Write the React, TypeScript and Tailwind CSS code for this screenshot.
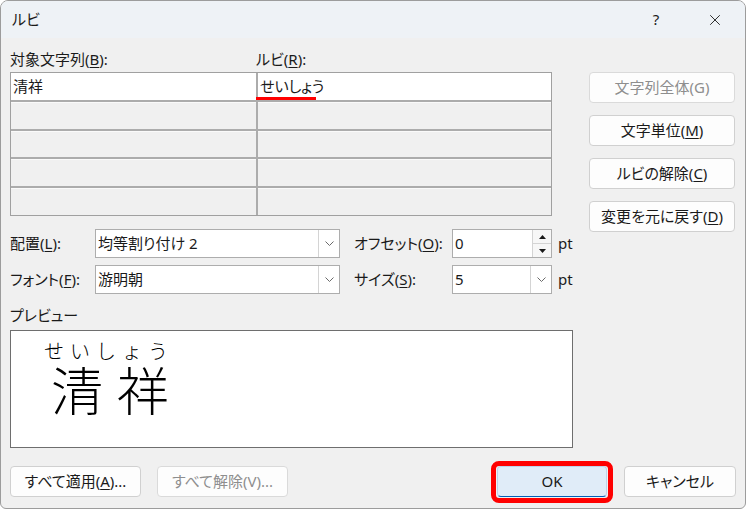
import { X } from "lucide-react";

const U = ({ c }: { c: string }) => <span className="underline underline-offset-2">{c}</span>;

const Chevron = () => (
  <svg width="9" height="5" viewBox="0 0 9 5" fill="none">
    <path d="M0.5 0.5 L4.5 4.5 L8.5 0.5" stroke="#6a6a6a" strokeWidth="1" />
  </svg>
);

const Btn = ({ children, disabled = false, w }: { children: React.ReactNode; disabled?: boolean; w: string }) => (
  <div
    className={`${w} h-[31px] flex items-center justify-center rounded-[4px] border bg-[#fdfdfd] ${
      disabled ? "border-[#dadada] text-[#8e8e8e]" : "border-[#d0d0d0] text-[#1a1a1a]"
    }`}
  >
    {children}
  </div>
);

const Combo = ({ value, w }: { value: string; w: string }) => (
  <div className={`${w} h-[29px] flex border border-[#adadad] bg-white`}>
    <div className="flex-1 pl-[2px] flex items-center">{value}</div>
    <div className="w-[21px] border-l border-[#d4d4d4] flex items-center justify-center">
      <Chevron />
    </div>
  </div>
);

const Spin = () => (
  <div className="w-[100px] h-[29px] flex border border-[#adadad] bg-white">
    <div className="flex-1 pl-[2px] flex items-center">0</div>
    <div className="w-[19px] flex flex-col border-l border-[#d4d4d4]">
      <div className="flex-1 flex items-center justify-center bg-[#f7f7f7] border-b border-[#d4d4d4]">
        <svg width="7" height="4" viewBox="0 0 7 4">
          <path d="M0 4 L3.5 0 L7 4 Z" fill="#1a1a1a" />
        </svg>
      </div>
      <div className="flex-1 flex items-center justify-center bg-[#f7f7f7]">
        <svg width="7" height="4" viewBox="0 0 7 4">
          <path d="M0 0 L3.5 4 L7 0 Z" fill="#1a1a1a" />
        </svg>
      </div>
    </div>
  </div>
);

const App = () => {
  return (
    <div className="w-[746px] h-[510px] bg-white">
      <div className="w-[746px] h-[509px] flex flex-col rounded-t-[8px] rounded-b-[6px] border border-[#9c9c9c] bg-[#f0f0f0] overflow-hidden text-[15px] text-[#1a1a1a] font-['Noto_Sans','Noto_Sans_CJK_JP',sans-serif] [font-feature-settings:'palt']">
        {/* title bar */}
        <div className="h-[37px] flex items-center bg-[#eef2f6] pl-[11px]">
          <span>ルビ</span>
          <div className="flex-1" />
          <span className="w-[14px] text-center mr-[43px] text-[15px]">?</span>
          <X size={18} strokeWidth={1.2} className="mr-[21px] text-[#1a1a1a]" />
        </div>

        {/* body */}
        <div className="flex pl-[9px]">
          <div className="w-[563px] flex flex-col pt-[10px]">
            <div className="h-[22px] flex items-center">
              <span className="w-[246px]">
                対象文字列(<U c="B" />):
              </span>
              <span>
                ルビ(<U c="R" />):
              </span>
            </div>

            <div className="mt-[2px] w-[542px] h-[144px] grid grid-cols-[245px_1fr] grid-rows-5 gap-[2px] border border-[#a0a0a0] bg-[#acacac]">
              <div className="bg-white flex items-center pl-[2px]">清祥</div>
              <div className="bg-white flex items-center pl-[2px] relative">
                せいしょう
                <span className="absolute left-[-2px] bottom-0 w-[60px] h-[3px] bg-[#ff0000]" />
              </div>
              <div className="bg-[#f0f0f0] border-t border-[#fafafa]" />
              <div className="bg-[#f0f0f0] border-t border-[#fafafa]" />
              <div className="bg-[#f0f0f0] border-t border-[#fafafa]" />
              <div className="bg-[#f0f0f0] border-t border-[#fafafa]" />
              <div className="bg-[#f0f0f0] border-t border-[#fafafa]" />
              <div className="bg-[#f0f0f0] border-t border-[#fafafa]" />
              <div className="bg-[#f0f0f0] border-t border-[#fafafa]" />
              <div className="bg-[#f0f0f0] border-t border-[#fafafa]" />
            </div>

            <div className="mt-[13px] flex items-center">
              <span className="w-[85px]">
                配置(<U c="L" />):
              </span>
              <Combo value="均等割り付け 2" w="w-[245px]" />
              <span className="w-[98px] ml-[14px]">
                オフセット(<U c="O" />):
              </span>
              <Spin />
              <span className="ml-[6px]">pt</span>
            </div>

            <div className="mt-[7px] flex items-center">
              <span className="w-[85px]">
                フォント(<U c="F" />):
              </span>
              <Combo value="游明朝" w="w-[245px]" />
              <span className="w-[98px] ml-[14px]">
                サイズ(<U c="S" />):
              </span>
              <Combo value="5" w="w-[100px]" />
              <span className="ml-[6px]">pt</span>
            </div>

            <div className="mt-[10px] h-[22px] flex items-center">プレビュー</div>

            <div className="mt-[4px] h-[118px] border border-[#6e6e6e] bg-white flex flex-col [font-feature-settings:normal] font-['Noto_Sans_CJK_JP',serif] text-black">
              <div className="pt-[10px] pl-[33px] h-[30px] text-[20px] leading-[20px] tracking-[6px] font-light">
                せいしょう
              </div>
              <div className="mt-[3px] pl-[40px] text-[52px] leading-[50px] tracking-[14px] font-light">
                清祥
              </div>
            </div>
          </div>

          <div className="ml-[16px] pt-[34px] flex flex-col gap-[12px]">
            <Btn w="w-[146px]" disabled>
              文字列全体(G)
            </Btn>
            <Btn w="w-[146px]">
              文字単位(<U c="M" />)
            </Btn>
            <Btn w="w-[146px]">
              ルビの解除(<U c="C" />)
            </Btn>
            <Btn w="w-[146px]">
              変更を元に戻す(<U c="D" />)
            </Btn>
          </div>
        </div>

        {/* bottom buttons */}
        <div className="mt-[18px] flex items-center pl-[9px] pr-[9px]">
          <Btn w="w-[131px]">
            すべて適用(<U c="A" />)...
          </Btn>
          <div className="ml-[16px]">
            <Btn w="w-[131px]" disabled>
              すべて解除(V)...
            </Btn>
          </div>
          <div className="flex-1" />
          <div className="relative">
            <div className="w-[110px] h-[31px] flex items-center justify-center rounded-[4px] border border-[#bcd3ea] border-b-[#005fb8] bg-[#e0ecf8]">
              OK
            </div>
            <div className="absolute -left-[6px] -right-[6px] -top-[5px] -bottom-[6px] border-[5px] border-[#ff0000] rounded-[8px]" />
          </div>
          <div className="ml-[17px]">
            <Btn w="w-[112px]">キャンセル</Btn>
          </div>
        </div>
      </div>
    </div>
  );
};

export default App;
